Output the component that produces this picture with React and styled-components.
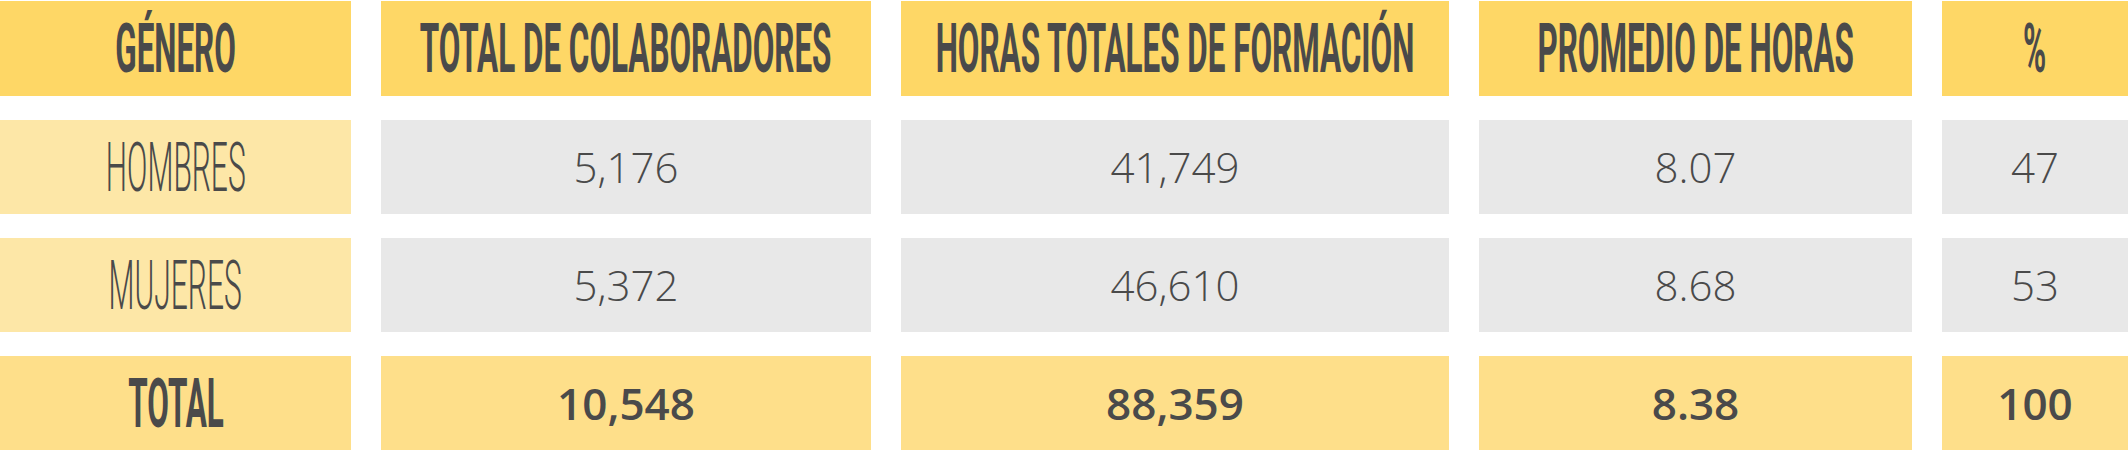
import React from "react";
import styled, { createGlobalStyle } from "styled-components";

const GlobalStyle = createGlobalStyle`
  html, body {
    margin: 0;
    padding: 0;
    background: #fff;
  }
`;

const headers = [
  "GÉNERO",
  "TOTAL DE COLABORADORES",
  "HORAS TOTALES DE FORMACIÓN",
  "PROMEDIO DE HORAS",
  "%",
];

const rows = [
  { label: "HOMBRES", values: ["5,176", "41,749", "8.07", "47"] },
  { label: "MUJERES", values: ["5,372", "46,610", "8.68", "53"] },
];

const total = { label: "TOTAL", values: ["10,548", "88,359", "8.38", "100"] };

const App = () => {
  return (
    <>
      <GlobalStyle />
      <Table>
        {headers.map((h) => (
          <HeadCell key={h}>
            <Condensed $weight={700} $squeeze={0.455}>
              {h}
            </Condensed>
          </HeadCell>
        ))}

        {rows.map((r) => (
          <React.Fragment key={r.label}>
            <LabelCell>
              <Condensed $weight={300} $squeeze={0.435}>
                {r.label}
              </Condensed>
            </LabelCell>
            {r.values.map((v, i) => (
              <ValueCell key={i}>
                <Number>{v}</Number>
              </ValueCell>
            ))}
          </React.Fragment>
        ))}

        <TotalCell>
          <Condensed $weight={700} $squeeze={0.455}>
            {total.label}
          </Condensed>
        </TotalCell>
        {total.values.map((v, i) => (
          <TotalCell key={i}>
            <Number $bold>{v}</Number>
          </TotalCell>
        ))}
      </Table>
    </>
  );
};

const Table = styled.div`
  display: grid;
  grid-template-columns: 351px 490px 548px 433px 1fr;
  grid-template-rows: 95px repeat(3, 94px);
  column-gap: 30px;
  row-gap: 24px;
  padding-top: 1px;
  width: 2128px;
  box-sizing: border-box;
  color: #4a4a4a;
`;

const Cell = styled.div`
  display: flex;
  align-items: center;
  justify-content: center;
  overflow: hidden;
`;

const HeadCell = styled(Cell)`
  background: #fed766;
`;

const LabelCell = styled(Cell)`
  background: #fde7a7;
`;

const ValueCell = styled(Cell)`
  background: #e8e8e8;
`;

const TotalCell = styled(Cell)`
  background: #fedf8a;
`;

// no condensed face installed, so squeeze a regular one horizontally
const Condensed = styled.span`
  display: inline-block;
  flex-shrink: 0;
  white-space: nowrap;
  font-family: Roboto, "Liberation Sans", sans-serif;
  font-weight: ${(p) => p.$weight};
  font-size: 69px;
  line-height: 1;
  transform: scaleX(${(p) => p.$squeeze});
  transform-origin: center;
`;

const Number = styled.span`
  font-family: "Open Sans", "Liberation Sans", sans-serif;
  font-weight: ${(p) => (p.$bold ? 600 : 350)};
  font-size: ${(p) => (p.$bold ? "44px" : "42px")};
  line-height: 1;
  white-space: nowrap;
`;

export default App;
